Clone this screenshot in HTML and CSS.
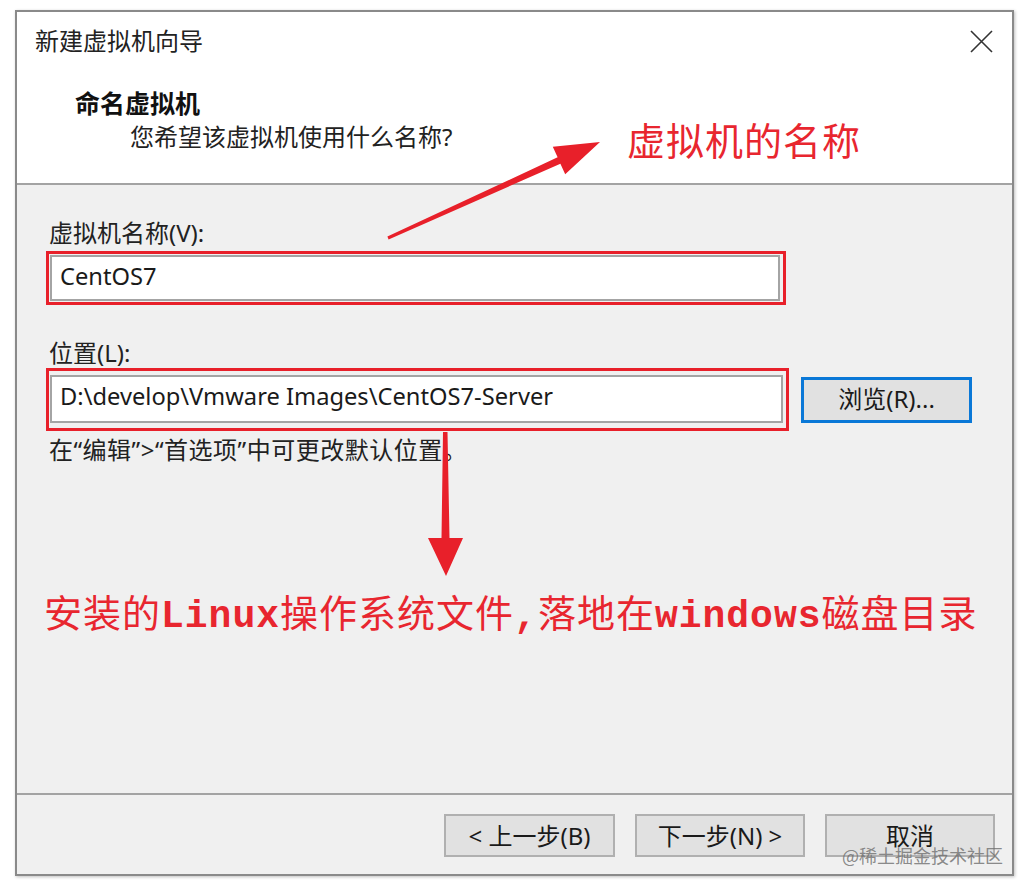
FILE: index.html
```html
<!DOCTYPE html>
<html lang="zh-CN">
<head>
<meta charset="utf-8">
<title>新建虚拟机向导</title>
<link rel="stylesheet" href="styles.css">
</head>
<body>
<div class="window">
  <header class="head">
    <div class="titlebar">
      <span class="title">新建虚拟机向导</span>
      <svg class="close" width="23" height="23" viewBox="0 0 23 23"><path d="M1 1 L22 22 M22 1 L1 22" stroke="#333" stroke-width="1.6" fill="none"/></svg>
    </div>
    <div class="heading">命名虚拟机</div>
    <div class="subtitle">您希望该虚拟机使用什么名称?</div>
  </header>
  <main class="body">
    <div class="label">虚拟机名称(V):</div>
    <div class="redbox name"><div class="input">CentOS7</div></div>
    <div class="label loc">位置(L):</div>
    <div class="row">
      <div class="redbox path"><div class="input">D:\develop\Vmware Images\CentOS7-Server</div></div>
      <div class="btn browse">浏览(R)...</div>
    </div>
    <div class="hint">在“编辑”&gt;“首选项”中可更改默认位置。</div>
  </main>
  <footer class="foot">
    <div class="btn">&lt; 上一步(B)</div>
    <div class="btn">下一步(N) &gt;</div>
    <div class="btn">取消</div>
  </footer>
</div>
<div class="overlay">
  <svg class="arrows" width="1028" height="889" viewBox="0 0 1028 889">
    <polygon fill="#e8202a" points="387.4,236.6 557.6,157.3 552.8,146.8 600,142 565.2,174.2 560.4,163.7 388.6,239.4"/>
    <polygon fill="#e8202a" points="443,432 447.5,432 449.5,538 463,538 446,576 428,538 441.5,538"/>
  </svg>
  <div class="note note-top">虚拟机的名称</div>
  <div class="note note-bottom">安装的<span class="mono">Linux</span>操作系统文件<span class="mono">,</span>落地在<span class="mono">windows</span>磁盘目录</div>
  <div class="watermark">@稀土掘金技术社区</div>
</div>
</body>
</html>
```
FILE: styles.css
```css
html, body {
  margin: 0;
  padding: 0;
  background: #ffffff;
}
body {
  width: 1028px;
  height: 889px;
  position: relative;
  overflow: hidden;
  font-family: "Noto Sans", "Noto Sans CJK SC", sans-serif;
  color: #1a1a1a;
}
.window {
  margin: 10px 0 0 15px;
  width: 999px;
  height: 866px;
  box-sizing: border-box;
  border: 2px solid #8a8a8a;
  box-shadow: 1px 1px 3px rgba(0,0,0,0.25);
  background: #f0f0f0;
  display: flex;
  flex-direction: column;
}
.head {
  height: 173px;
  box-sizing: border-box;
  background: #ffffff;
  border-bottom: 2px solid #a3a3a3;
  flex: none;
}
.titlebar {
  height: 58px;
  display: flex;
  align-items: center;
  justify-content: space-between;
  padding: 0 19px 0 18px;
}
.title {
  font-size: 24px;
  line-height: 58px;
  color: #222;
}
.close {
  display: block;
}
.heading {
  margin-top: 18px;
  padding-left: 58px;
  font-size: 25px;
  line-height: 30px;
  font-weight: 700;
  color: #111;
}
.subtitle {
  margin-top: 4px;
  padding-left: 113px;
  font-size: 24px;
  line-height: 30px;
  color: #222;
}
.body {
  flex: 1;
  padding: 33px 0 0 29px;
}
.label {
  padding-left: 3px;
  font-size: 24px;
  line-height: 30px;
  color: #222;
}
.label.loc {
  margin-top: 33px;
}
.redbox {
  border: 3px solid #e8202a;
  box-sizing: border-box;
}
.redbox.name {
  margin-top: 3px;
  width: 740px;
  padding: 1px 3px 1px 1px;
}
.redbox.path {
  width: 743px;
  padding: 4px 3px 5px 1px;
}
.input {
  background: #ffffff;
  border: 2px solid #a4a4a4;
  box-sizing: border-box;
  height: 46px;
  padding-left: 8px;
  font-size: 23.7px;
  line-height: 39px;
  color: #1a1a1a;
  white-space: nowrap;
}
.redbox.path .input {
  height: 48px;
  line-height: 38px;
}
.row {
  display: flex;
  align-items: center;
  gap: 12px;
}
.btn {
  box-sizing: border-box;
  height: 43px;
  width: 170px;
  background: #e1e1e1;
  border: 2px solid #b0b0b0;
  font-size: 24px;
  line-height: 39px;
  text-align: center;
  color: #1a1a1a;
}
.btn.browse {
  width: 171px;
  height: 46px;
  border: 3px solid #0a78d7;
  line-height: 38px;
}
.hint {
  margin-top: 4px;
  padding-left: 3px;
  font-size: 24px;
  line-height: 30px;
  letter-spacing: 0.5px;
  color: #222;
}
.foot {
  height: 81px;
  box-sizing: border-box;
  border-top: 2px solid #a3a3a3;
  flex: none;
  display: flex;
  justify-content: flex-end;
  gap: 20px;
  padding: 19px 17px 0 0;
}
.foot .btn:first-child {
  width: 171px;
}
.overlay {
  position: absolute;
  left: 0;
  top: 0;
  width: 1028px;
  height: 889px;
  pointer-events: none;
}
.arrows {
  position: absolute;
  left: 0;
  top: 0;
}
.note {
  position: absolute;
  color: #e8262f;
  font-family: "Noto Sans CJK SC", sans-serif;
  font-size: 38px;
  line-height: 40px;
  letter-spacing: 1px;
  white-space: nowrap;
}
.note-top {
  left: 627px;
  top: 119px;
}
.note-bottom {
  left: 44px;
  top: 591px;
}
.mono {
  font-family: "Liberation Mono", monospace;
  font-weight: 700;
}
.watermark {
  position: absolute;
  left: 842px;
  top: 843px;
  font-family: "Noto Sans CJK SC", sans-serif;
  font-size: 18px;
  line-height: 24px;
  color: rgba(110,110,110,0.8);
  white-space: nowrap;
}
```
